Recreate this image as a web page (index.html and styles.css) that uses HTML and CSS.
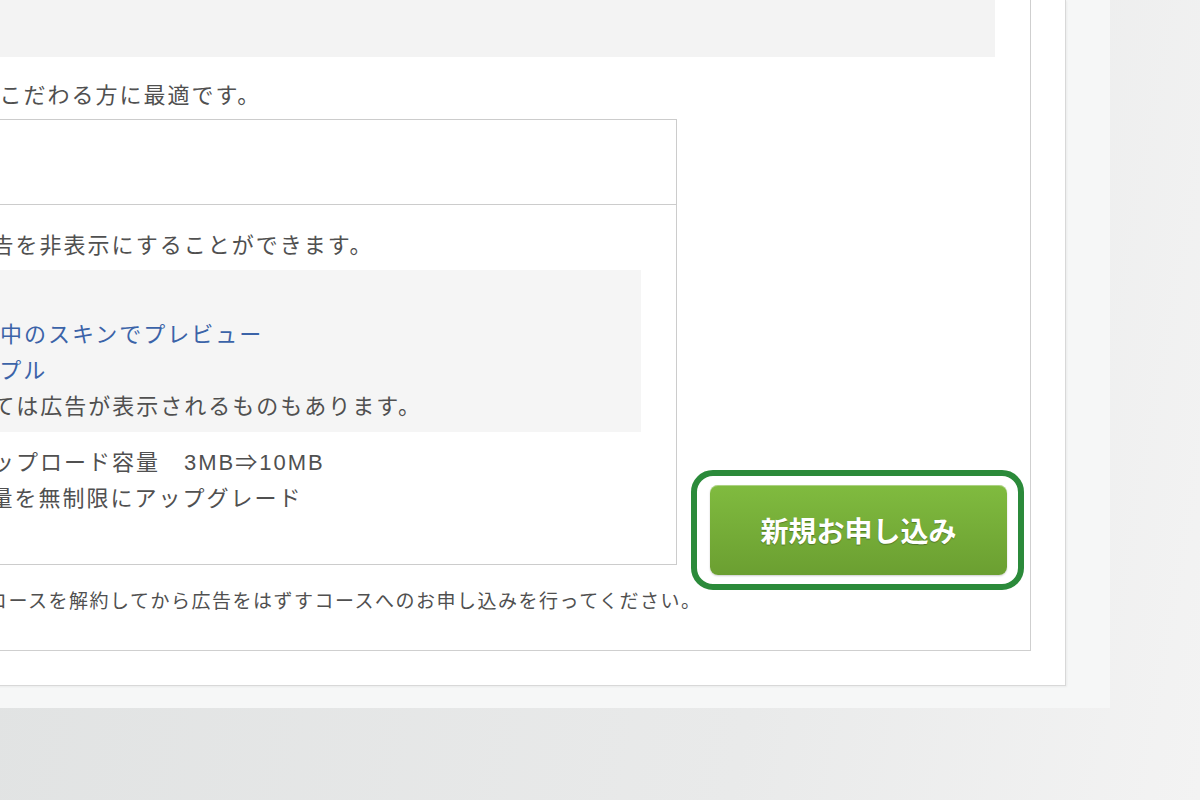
FILE: index.html
```html
<!DOCTYPE html>
<html lang="ja">
<head>
  <meta charset="UTF-8" />
  <meta name="viewport" content="width=device-width, initial-scale=1.0" />
  <title>広告をはずすコース</title>
  <link rel="stylesheet" href="styles.css">
</head>
<body>
  <div class="panel">
    <div class="card">
      <div class="course-box">
        <div class="course-head"></div>
        <p class="lead">広告を表示せず見た目やデザインにこだわる方に最適です。</p>
        <div class="course-row">
          <div class="course-main">
            <div class="plan">
              <div class="plan-head">広告をはずすコース</div>
              <div class="plan-body">
                <div class="plan-label">内容</div>
                <div class="plan-value">
                  <p>ブログページの広告を非表示にすることができます。</p>
                  <div class="preview">
                    <p>プレビュー</p>
                    <ul class="preview-links">
                      <li><a href="#">・使用中のスキンでプレビュー</a></li>
                      <li><a href="#">・サンプル</a></li>
                    </ul>
                    <p>※スキンによっては広告が表示されるものもあります。</p>
                  </div>
                  <ul class="features">
                    <li>・ファイルアップロード容量　<span class="num">3MB⇒10MB</span></li>
                    <li>・ディスク容量を無制限にアップグレード</li>
                  </ul>
                </div>
              </div>
            </div>
            <p class="note">※他の有料コースをご利用中の場合は、コースを解約してから広告をはずすコースへのお申し込みを行ってください。</p>
          </div>
          <div class="apply">
            <button class="apply-btn">新規お申し込み</button>
          </div>
        </div>
      </div>
    </div>
  </div>
</body>
</html>
```

FILE: styles.css
```css
* {
  margin: 0;
  padding: 0;
  box-sizing: border-box;
}

html, body {
  width: 100%;
  height: 100%;
}

body {
  overflow: hidden;
  font-family: "Noto Sans CJK JP", sans-serif;
  color: #505050;
  background: linear-gradient(100deg, #e0e2e2 0%, #e9eaea 65%, #f3f3f3 100%);
}

ul {
  list-style: none;
}

a {
  color: #3b63a8;
  text-decoration: none;
}

.panel {
  width: 1110px;
  padding-bottom: 22px;
  background: #f6f7f7;
}

.card {
  width: 1486px;
  margin-left: -420px;
  padding: 0 34px 34px 20px;
  background: #fff;
  border-right: 1px solid #d8d8d8;
  border-bottom: 1px solid #d8d8d8;
  box-shadow: 1px 1px 2px rgba(0,0,0,0.05);
}

.course-box {
  padding: 0 6px 32px 16px;
  border-right: 1px solid #cfcfcf;
  border-bottom: 1px solid #cfcfcf;
  font-size: 22px;
  line-height: 36px;
  letter-spacing: 2px;
}

.course-head {
  height: 57px;
  margin-right: 29px;
  background: #f3f3f3;
}

.lead {
  margin: 18px 0 8px;
}

.course-row {
  display: flex;
  align-items: flex-end;
  gap: 14px;
}

.course-main {
  width: 1061px;
}

.plan {
  border: 1px solid #cccccc;
}

.plan-head {
  height: 85px;
  padding-left: 16px;
  line-height: 84px;
  border-bottom: 1px solid #cccccc;
}

.plan-body {
  display: flex;
}

.plan-label {
  width: 160px;
  padding: 20px 16px;
}

.plan-value {
  flex: 1;
  padding: 20px 35px 50px 23px;
}

.preview {
  margin-top: 9px;
  padding: 8px 0 10px 27px;
  background: #f5f5f5;
}

.preview-links {
  padding-left: 101px;
}

.features {
  margin-top: 10px;
  padding-left: 48px;
}

.features li {
  height: 36px;
}

.num {
  font-family: "Liberation Sans", "Noto Sans CJK JP", sans-serif;
  line-height: 1;
}

.note {
  margin-top: 17px;
  padding-left: 4px;
  font-size: 19px;
  letter-spacing: 1.5px;
  white-space: nowrap;
}

.apply {
  margin-bottom: 28px;
  padding: 9px 11px 9px 13px;
  background: #fff;
  border: 6px solid #2b8a3a;
  border-radius: 22px;
}

.apply-btn {
  display: block;
  width: 297px;
  height: 90px;
  border: none;
  border-radius: 8px;
  background: linear-gradient(#80bb3f, #6b9f31);
  box-shadow: inset 0 1px 0 rgba(255,255,255,0.35), 0 1px 2px rgba(0,0,0,0.2);
  color: #fff;
  font-family: "Noto Sans CJK JP", sans-serif;
  font-size: 28px;
  font-weight: 700;
  text-shadow: 0 1px 1px rgba(0,0,0,0.3);
}
```
